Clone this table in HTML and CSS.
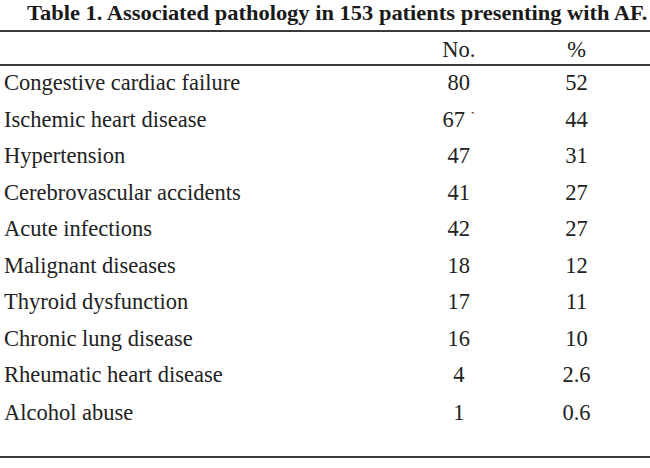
FILE: index.html
```html
<!DOCTYPE html>
<html>
<head>
<meta charset="utf-8">
<link rel="stylesheet" href="styles.css">
</head>
<body>
<div class="page">
  <h1 class="caption"><span class="caption-text">Table 1. Associated pathology in 153 patients presenting with AF.</span></h1>
  <table class="data">
    <thead>
      <tr><th class="label"></th><th class="num">No.</th><th class="pct">%</th><th class="pad"></th></tr>
    </thead>
    <tbody>
      <tr><td class="label">Congestive cardiac failure</td><td class="num">80</td><td class="pct">52</td><td class="pad"></td></tr>
      <tr><td class="label">Ischemic heart disease</td><td class="num">67 <span class="tick">`</span></td><td class="pct">44</td><td class="pad"></td></tr>
      <tr><td class="label">Hypertension</td><td class="num">47</td><td class="pct">31</td><td class="pad"></td></tr>
      <tr><td class="label">Cerebrovascular accidents</td><td class="num">41</td><td class="pct">27</td><td class="pad"></td></tr>
      <tr><td class="label">Acute infections</td><td class="num">42</td><td class="pct">27</td><td class="pad"></td></tr>
      <tr><td class="label">Malignant diseases</td><td class="num">18</td><td class="pct">12</td><td class="pad"></td></tr>
      <tr><td class="label">Thyroid dysfunction</td><td class="num">17</td><td class="pct">11</td><td class="pad"></td></tr>
      <tr><td class="label">Chronic lung disease</td><td class="num">16</td><td class="pct">10</td><td class="pad"></td></tr>
      <tr><td class="label">Rheumatic heart disease</td><td class="num">4</td><td class="pct">2.6</td><td class="pad"></td></tr>
      <tr class="last"><td class="label">Alcohol abuse</td><td class="num">1</td><td class="pct">0.6</td><td class="pad"></td></tr>
    </tbody>
  </table>
</div>
</body>
</html>
```
FILE: styles.css
```css
html, body {
  margin: 0;
  padding: 0;
  background: #ffffff;
}
.page {
  width: 650px;
  height: 468px;
  font-family: "Liberation Serif", "Times New Roman", serif;
  color: #222222;
  overflow: hidden;
}
.caption {
  margin: 0;
  height: 30px;
  box-sizing: border-box;
  padding: 1px 0 0 27px;
  font-size: 21px;
  line-height: 24px;
  font-weight: bold;
  white-space: nowrap;
  color: #1a1a1a;
}
.caption-text {
  display: inline-block;
  transform: scaleX(1.07);
  transform-origin: left center;
}
.data {
  width: 650px;
  border-collapse: collapse;
  border-top: 2px solid #3a3a3a;
  border-bottom: 2px solid #3a3a3a;
  font-size: 22.5px;
}
.data th {
  font-weight: normal;
  height: 28px;
  padding: 4px 0 0 0;
  border-bottom: 2px solid #3a3a3a;
}
.data td {
  height: 34.5px;
  padding: 0 0 2px 0;
}
.data .label {
  text-align: left;
  padding-left: 4px;
  width: 400px;
}
.data .num {
  text-align: center;
  width: 115px;
}
.data .pct {
  text-align: center;
  width: 122px;
}
.data .pad {
  width: 13px;
}
.data tr.last td {
  height: 56.5px;
  vertical-align: top;
  padding-top: 5px;
  padding-bottom: 0;
}
.tick {
  font-size: 14px;
  vertical-align: 5px;
}
```
